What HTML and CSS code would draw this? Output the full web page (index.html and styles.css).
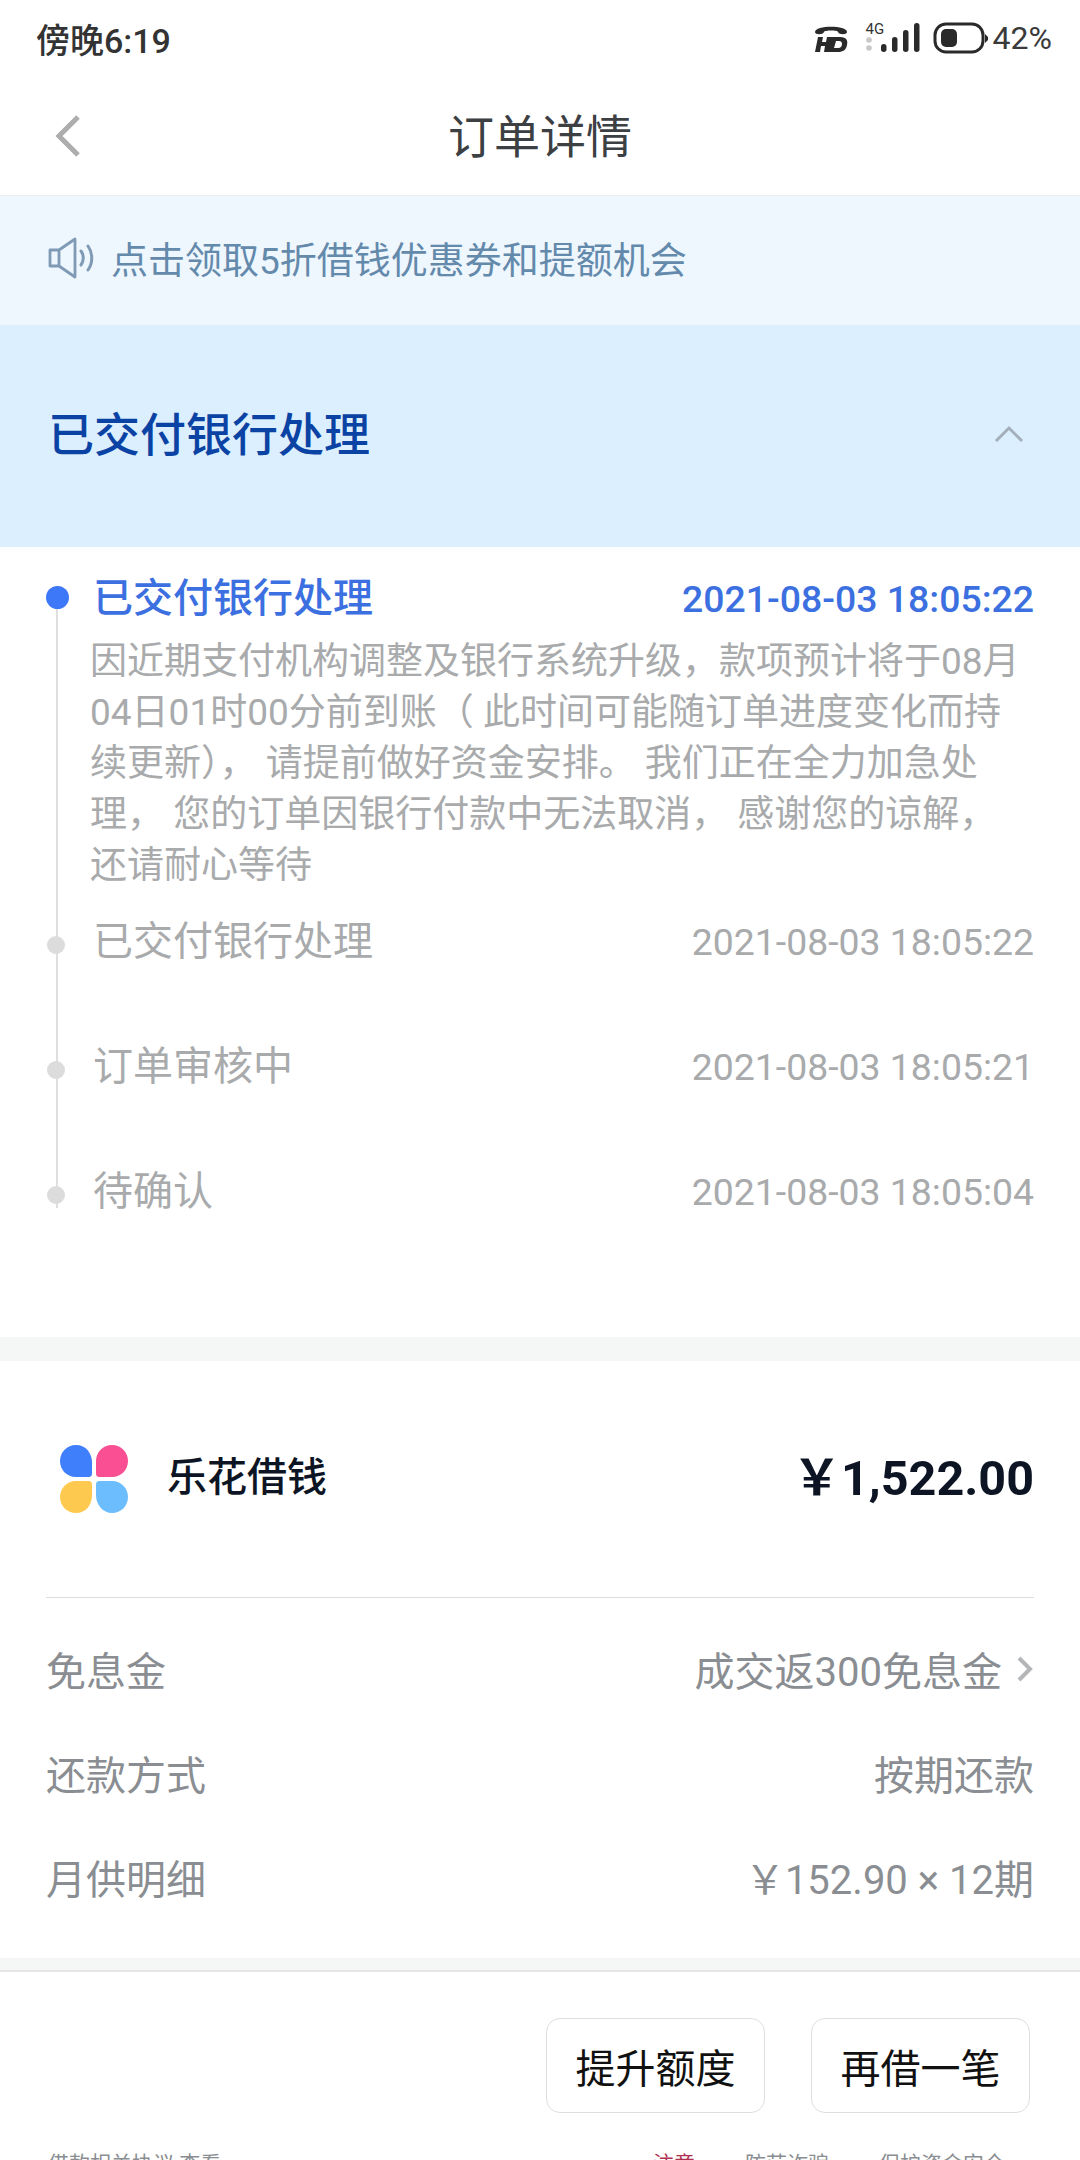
FILE: index.html
```html
<!doctype html>
<html lang="zh-CN">
<head>
	<meta charset="UTF-8">
	<title>订单详情</title>
	<link rel="stylesheet" href="styles.css">
</head>
<body>
	<div class="status">
		<span class="clock">傍晚6:19</span>
		<div class="status-right">
			<svg class="hd" width="34" height="30" viewBox="0 0 34 30">
				<path d="M1 9C1 2 33 2 33 9C33 12 25 12 24 9C24 7 10 7 10 9C9 12 1 12 1 9Z" fill="#2a2a2a"/>
				<path d="M4 14H9L8 19H12L13 14H18L15 29H10L11 23H7L6 29H1ZM18 14H26C33 14 34 18 33 22C32 27 29 29 24 29H15ZM22 18L20 25H24C27 25 28 23 28 21C28 19 27 18 25 18Z" fill="#2a2a2a"/>
			</svg>
			<div class="net">
				<span class="net-label">4G</span>
				<svg width="56" height="30" viewBox="0 0 56 30">
					<circle cx="4" cy="17" r="2.8" fill="#c8c8c8"/>
					<circle cx="4" cy="25" r="2.8" fill="#c8c8c8"/>
					<rect x="16" y="21" width="5.5" height="8" rx="2.7" fill="#2a2a2a"/>
					<rect x="27" y="14" width="5.5" height="15" rx="2.7" fill="#2a2a2a"/>
					<rect x="38" y="7" width="5.5" height="22" rx="2.7" fill="#2a2a2a"/>
					<rect x="49" y="0" width="5.5" height="29" rx="2.7" fill="#2a2a2a"/>
				</svg>
			</div>
			<svg class="batt" width="56" height="32" viewBox="0 0 56 32">
				<rect x="2" y="2" width="48" height="28" rx="11" fill="none" stroke="#2a2a2a" stroke-width="3"/>
				<rect x="8" y="7" width="16" height="18" rx="5" fill="#2a2a2a"/>
				<path d="M52 12L55 15V18L52 21Z" fill="#2a2a2a"/>
			</svg>
			<span class="pct">42%</span>
		</div>
	</div>

	<div class="nav">
		<svg class="back" width="26" height="44" viewBox="0 0 26 44">
			<path d="M23 3L4 22L23 41" fill="none" stroke="#adadad" stroke-width="5"/>
		</svg>
		<h1>订单详情</h1>
	</div>

	<div class="notice">
		<svg width="48" height="42" viewBox="0 0 48 42">
			<path d="M2 13H11L27 2V40L11 29H2ZM11 13V29" fill="none" stroke="#7f9ab5" stroke-width="2.8" stroke-linejoin="round"/>
			<path d="M33 14C36 18 36 24 33 28M40 9C45 16 45 26 40 33" fill="none" stroke="#7f9ab5" stroke-width="3" stroke-linecap="round"/>
		</svg>
		<span>点击领取5折借钱优惠券和提额机会</span>
	</div>

	<div class="state">
		<h2>已交付银行处理</h2>
		<svg width="30" height="18" viewBox="0 0 30 18">
			<path d="M2 16L15 3L28 16" fill="none" stroke="#a3afba" stroke-width="3"/>
		</svg>
	</div>

	<div class="timeline">
		<div class="step step-on">
			<div class="step-head">
				<span class="step-name">已交付银行处理</span>
				<span class="step-time">2021-08-03 18:05:22</span>
			</div>
			<p>因近期支付机构调整及银行系统升级，款项预计将于08月04日01时00分前到账（ 此时间可能随订单进度变化而持续更新）， 请提前做好资金安排。 我们正在全力加急处理， 您的订单因银行付款中无法取消， 感谢您的谅解， 还请耐心等待</p>
		</div>
		<div class="step">
			<div class="step-head">
				<span class="step-name">已交付银行处理</span>
				<span class="step-time">2021-08-03 18:05:22</span>
			</div>
		</div>
		<div class="step">
			<div class="step-head">
				<span class="step-name">订单审核中</span>
				<span class="step-time">2021-08-03 18:05:21</span>
			</div>
		</div>
		<div class="step">
			<div class="step-head">
				<span class="step-name">待确认</span>
				<span class="step-time">2021-08-03 18:05:04</span>
			</div>
		</div>
	</div>

	<div class="gap"></div>

	<div class="order">
		<div class="brand">
			<div class="brand-left">
				<svg width="72" height="72" viewBox="0 0 72 72">
					<path d="M18 2C28 2 34 10 34 20V30C34 33 33 34 30 34H18C9 34 2 27 2 18C2 9 9 2 18 2Z" fill="#3f7ffb"/>
					<path d="M54 2C63 2 70 9 70 18C70 27 63 34 54 34H42C39 34 38 33 38 30V18C38 9 45 2 54 2Z" fill="#fb4f93"/>
					<path d="M42 38H54C63 38 70 45 70 54C70 63 63 70 54 70C45 70 38 62 38 52V42C38 39 39 38 42 38Z" fill="#6cbdfd"/>
					<path d="M18 38H30C33 38 34 39 34 42V52C34 62 28 70 18 70C9 70 2 63 2 54C2 45 9 38 18 38Z" fill="#fec94f"/>
				</svg>
				<span class="brand-name">乐花借钱</span>
			</div>
			<span class="amount">￥1,522.00</span>
		</div>
		<div class="rows">
			<div class="row">
				<span>免息金</span>
				<span class="row-val">成交返300免息金
					<svg width="18" height="30" viewBox="0 0 18 30"><path d="M3 4L14 15L3 26" fill="none" stroke="#b4b6b8" stroke-width="4"/></svg>
				</span>
			</div>
			<div class="row"><span>还款方式</span><span class="row-val">按期还款</span></div>
			<div class="row"><span>月供明细</span><span class="row-val">￥152.90 × 12期</span></div>
		</div>
	</div>

	<div class="gap-thin"></div>

	<div class="actions">
		<button>提升额度</button>
		<button>再借一笔</button>
	</div>

	<div class="foot">
		<span>借款相关协议 查看</span>
		<span class="foot-right"><em>注意</em><span>防范诈骗</span><span>保护资金安全</span></span>
	</div>
</body>
</html>
```

FILE: styles.css
```css
*{margin:0;padding:0;box-sizing:border-box;}
html,body{height:2160px;overflow:hidden;}
body{
	background:#fff;
	font-family:"Roboto","Noto Sans CJK SC",sans-serif;
}
svg{display:block;flex:none;}

.status{
	height:80px;
	padding:0 28px 4px 36px;
	display:flex;
	align-items:center;
	justify-content:space-between;
}
.clock{font-size:34px;color:#333;font-weight:500;}
.status-right{display:flex;align-items:center;}
.net{position:relative;margin-left:17px;}
.net-label{
	position:absolute;
	left:1px;
	top:-1px;
	font-size:15px;
	line-height:14px;
	color:#333;
}
.batt{margin-left:12px;}
.pct{font-size:32px;color:#3a3a3a;margin-left:4px;}

.nav{
	height:116px;
	padding-bottom:10px;
	position:relative;
	display:flex;
	align-items:center;
	justify-content:center;
	border-bottom:1px solid #ececec;
}
.back{position:absolute;left:55px;top:34px;}
.nav h1{font-size:46px;font-weight:400;color:#3c4043;}

.notice{
	height:129px;
	padding:0 0 6px 48px;
	display:flex;
	align-items:center;
	gap:15px;
	background:#eef6fe;
	font-size:37px;
	color:#6389ab;
}

.state{
	height:222px;
	padding:0 56px 10px 48px;
	display:flex;
	align-items:center;
	justify-content:space-between;
	background:#dcefff;
}
.state svg{margin-top:6px;}
.state h2{font-size:46px;font-weight:500;color:#0a43a3;}

.timeline{
	height:790px;
	padding:25px 46px 0 93px;
	position:relative;
}
.step{position:relative;}
.step::before{
	content:"";
	position:absolute;
	left:-46px;
	top:21px;
	width:18px;
	height:18px;
	border-radius:50%;
	background:#dcdcdc;
	z-index:1;
}
.step-on::before{
	left:-47px;
	top:14px;
	width:23px;
	height:23px;
	background:#3c78f8;
}
.timeline::before{
	content:"";
	position:absolute;
	left:56px;
	top:50px;
	height:611px;
	width:2px;
	background:#dfdfdf;
}
.step-head{
	height:125px;
	display:flex;
	justify-content:space-between;
	font-size:40px;
	line-height:54px;
	color:#a8aaac;
}
.step-time{font-size:37.4px;}
.step-on .step-head{height:auto;color:#3c70e0;font-weight:500;}
.step-on p{
	margin:10px 0 24px -3px;
	font-size:37px;
	line-height:51px;
	color:#a8aaac;
}

.gap{height:24px;background:#f5f6f6;}

.order{padding:0 46px;height:597px;}
.brand{
	height:237px;
	display:flex;
	align-items:center;
	justify-content:space-between;
	border-bottom:1px solid #dcdcdc;
}
.brand-left{display:flex;align-items:center;gap:37px;}
.brand-left svg{margin-left:12px;}
.brand-name{font-size:40px;font-weight:500;color:#0d1524;margin-bottom:10px;}
.amount{font-size:48.5px;font-weight:700;color:#0d1524;margin-bottom:10px;}
.rows{padding-top:19px;}
.row{
	height:104px;
	display:flex;
	align-items:center;
	justify-content:space-between;
	font-size:40px;
	color:#8a8e92;
}
.row-val{display:flex;align-items:center;gap:14px;}

.gap-thin{height:14px;background:#f5f6f6;border-bottom:2px solid #e6e6e6;}

.actions{
	padding:46px 50px 0 0;
	display:flex;
	justify-content:flex-end;
	gap:46px;
}
.actions button{
	width:219px;
	height:95px;
	background:#fff;
	border:1px solid #dedede;
	border-radius:14px;
	font-family:inherit;
	font-size:40px;
	color:#111;
}

.foot{
	padding:38px 75px 0 48px;
	display:flex;
	justify-content:space-between;
	font-size:21px;
	line-height:26px;
	color:#8a8e92;
}
.foot-right{display:flex;gap:50px;}
.foot-right em{font-style:normal;color:#b03050;}
```
